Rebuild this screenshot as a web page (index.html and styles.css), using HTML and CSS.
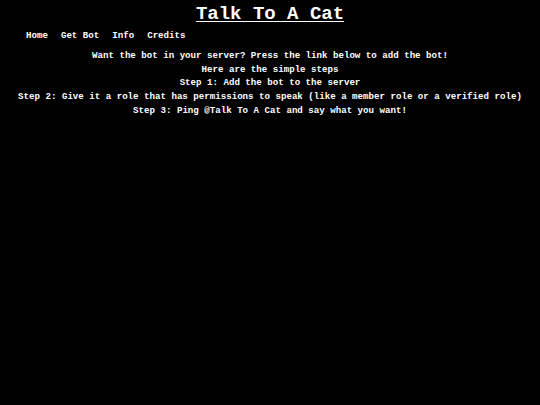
FILE: index.html
```html
<!DOCTYPE html>
<html>
<head>
<meta charset="utf-8">
<link rel="stylesheet" href="styles.css">
<title>Talk To A Cat</title>
</head>
<body>
<header class="header">
  <h1 class="title">Talk To A Cat</h1>
  <nav class="nav">
    <a class="nav-link" href="#">Home</a>
    <a class="nav-link" href="#">Get Bot</a>
    <a class="nav-link" href="#">Info</a>
    <a class="nav-link" href="#">Credits</a>
  </nav>
</header>
<main class="content">
  <p class="line">Want the bot in your server? Press the link below to add the bot!</p>
  <p class="line">Here are the simple steps</p>
  <p class="line">Step 1: Add the bot to the server</p>
  <p class="line">Step 2: Give it a role that has permissions to speak (like a member role or a verified role)</p>
  <p class="line">Step 3: Ping @Talk To A Cat and say what you want!</p>
</main>
</body>
</html>
```
FILE: styles.css
```css
html, body {
  margin: 0;
  padding: 0;
  background: #000;
  color: #fff;
}
body {
  font-family: "Liberation Mono", "DejaVu Sans Mono", monospace;
  font-weight: bold;
  width: 540px;
  height: 405px;
  overflow: hidden;
}
.header {
  display: flex;
  flex-direction: column;
}
.title {
  margin: 0;
  padding-top: 3px;
  font-size: 19px;
  line-height: 22px;
  text-align: center;
  text-decoration: underline;
  text-underline-offset: 2px;
  font-weight: bold;
}
.nav {
  display: flex;
  gap: 13px;
  padding-left: 26px;
  margin-top: 5px;
  font-size: 9.15px;
  line-height: 12px;
}
.nav-link {
  color: #fff;
  text-decoration: none;
}
.content {
  margin-top: 7px;
  display: flex;
  flex-direction: column;
  align-items: center;
}
.line {
  margin: 0;
  font-size: 9.15px;
  line-height: 13.7px;
  text-align: center;
  white-space: nowrap;
}
```
